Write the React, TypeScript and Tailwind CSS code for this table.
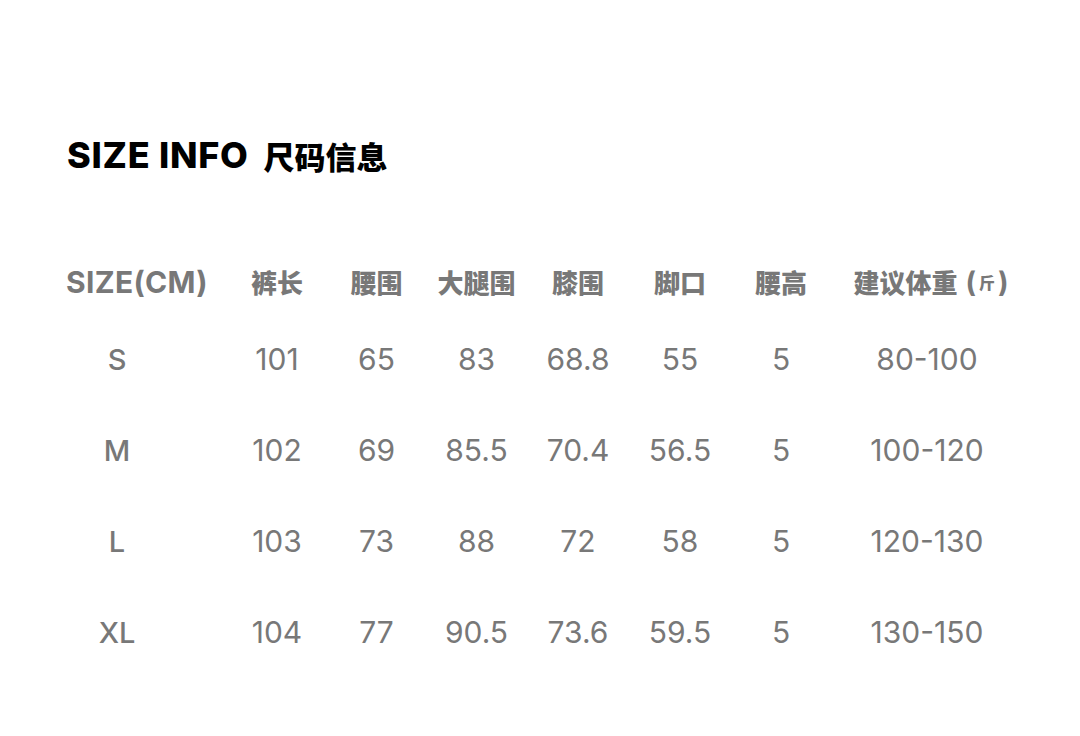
import React from 'react';

const headers = ['裤长', '腰围', '大腿围', '膝围', '脚口', '腰高'];

const rows = [
  { size: 'S', values: ['101', '65', '83', '68.8', '55', '5'], weight: '80-100' },
  { size: 'M', values: ['102', '69', '85.5', '70.4', '56.5', '5'], weight: '100-120' },
  { size: 'L', values: ['103', '73', '88', '72', '58', '5'], weight: '120-130' },
  { size: 'XL', values: ['104', '77', '90.5', '73.6', '59.5', '5'], weight: '130-150' },
];

const cols = 'grid grid-cols-[160px_100px_99px_101px_102px_102px_100px_200px] items-center';

export default function App() {
  return (
    <div className="min-h-screen w-full bg-white pl-[67px] pt-[137px] font-['Inter','Noto_Sans_CJK_SC',sans-serif]">
      <h1 className="flex items-center gap-[15px] leading-none text-black">
        <span className="text-[36px] font-extrabold tracking-[0.02em]">SIZE INFO</span>
        <span className="text-[31px] font-black font-['Noto_Sans_CJK_SC',sans-serif]">尺码信息</span>
      </h1>

      <div className="mt-[89px] text-[#787878]">
        <div className={`${cols} h-[40px]`}>
          <div className="-ml-[1px] text-[30px] font-bold leading-none tracking-[0.01em]">SIZE(CM)</div>
          {headers.map((h) => (
            <div key={h} className="text-center text-[26px] font-black leading-none font-['Noto_Sans_CJK_SC',sans-serif]">
              {h}
            </div>
          ))}
          <div className="flex items-center justify-center text-[26px] font-black leading-none font-['Noto_Sans_CJK_SC',sans-serif]">
            建议体重
            <span className="ml-[8px] font-['Inter',sans-serif] text-[28px] font-bold">(</span>
            <span className="mx-[3px] text-[16px]">斤</span>
            <span className="font-['Inter',sans-serif] text-[28px] font-bold">)</span>
          </div>
        </div>

        <div className="mt-[37px] flex flex-col gap-[51px]">
          {rows.map((r) => (
            <div key={r.size} className={`${cols} h-[40px]`}>
              <div className="w-[100px] text-center text-[29px] font-medium leading-none">{r.size}</div>
              {r.values.map((v, i) => (
                <div key={i} className="text-center text-[30px] leading-none">
                  {v}
                </div>
              ))}
              <div className="pr-[8px] text-center text-[30px] leading-none">{r.weight}</div>
            </div>
          ))}
        </div>
      </div>
    </div>
  );
}
